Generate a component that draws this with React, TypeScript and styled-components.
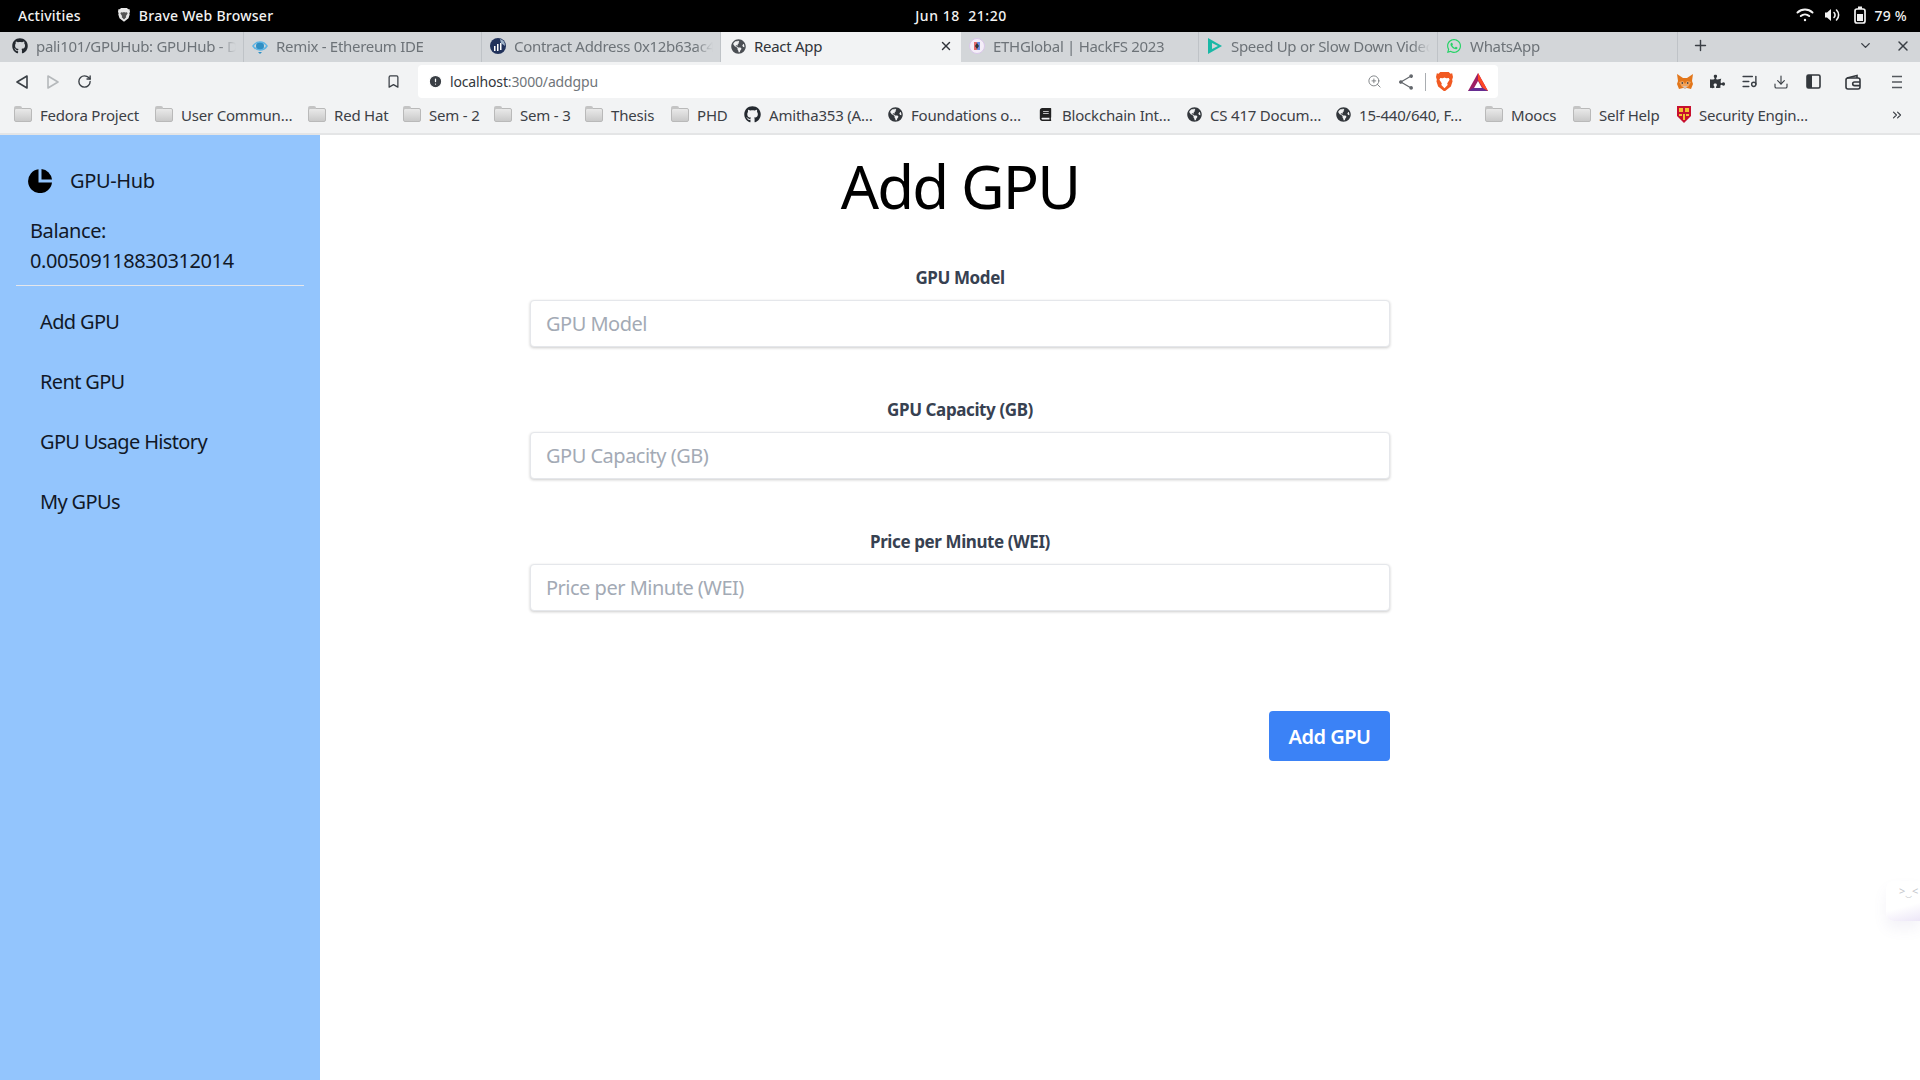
import React from "react";
import styled, { createGlobalStyle } from "styled-components";
import { FaGithub, FaGlobeAmericas, FaPuzzlePiece, FaBook, FaWhatsapp } from "react-icons/fa";
import { ZoomIn, Download, Plus, X, ChevronDown, ChevronsRight, RotateCw, Bookmark, ListMusic, AlertCircle } from "lucide-react";

const GlobalStyle = createGlobalStyle`
  * { box-sizing: border-box; }
  html, body { margin: 0; padding: 0; background: #fff; }
  body { font-family: "Noto Sans", "Open Sans", sans-serif; overflow: hidden; }
`;

const Page = styled.div`
  width: 1920px;
  height: 1080px;
  display: flex;
  flex-direction: column;
  overflow: hidden;
`;

const SystemBar = styled.div`
  height: 32px;
  background: #000;
  color: #f2f2f2;
  display: grid;
  grid-template-columns: 1fr auto 1fr;
  align-items: center;
  padding: 0 13px 2px 18px;
  font-size: 14px;
  font-weight: 500;
  letter-spacing: 0.25px;
`;

const SystemLeft = styled.div`
  display: flex;
  align-items: center;
`;

const AppName = styled.span`
  display: flex;
  align-items: center;
  gap: 9px;
  margin-left: 37px;
`;

const Clock = styled.span`
  letter-spacing: 0.55px;
  margin-right: 3px;
`;

const SystemRight = styled.div`
  display: flex;
  align-items: center;
  justify-content: flex-end;
`;

const StatusIcon = styled.span<{ $gap: number }>`
  display: flex;
  margin-right: ${(p) => p.$gap}px;
`;

const TabStrip = styled.div`
  height: 30px;
  background: #d3d6d9;
  display: flex;
  align-items: stretch;
  position: relative;
  z-index: 1;
`;

const Tab = styled.div<{ $active?: boolean; $width: number }>`
  width: ${(p) => p.$width}px;
  height: ${(p) => (p.$active ? 33 : 30)}px;
  background: ${(p) => (p.$active ? "#f2f3f4" : "transparent")};
  color: ${(p) => (p.$active ? "#30343a" : "#6d7378")};
  border-right: 1px solid ${(p) => (p.$active ? "transparent" : "#bfc3c7")};
  display: flex;
  align-items: center;
  gap: 8px;
  padding: 0 7px ${(p) => (p.$active ? 5 : 2)}px ${(p) => (p.$active ? 10 : 8)}px;
  font-size: 15px;
  letter-spacing: -0.3px;
  white-space: nowrap;

  &:first-child {
    padding-left: 12px;
  }
`;

const TabTitle = styled.span<{ $active?: boolean }>`
  flex: 1;
  overflow: hidden;
  min-width: 0;
  mask-image: ${(p) =>
    p.$active ? "none" : "linear-gradient(to right, #000 calc(100% - 18px), transparent)"};
`;

const StripControls = styled.div`
  flex: 1;
  display: flex;
  align-items: center;
  padding: 0 9px 3px 14px;
  color: #3a3f45;
`;

const Spacer = styled.div<{ $fixed?: number }>`
  flex: ${(p) => (p.$fixed ? `0 0 ${p.$fixed}px` : "1")};
`;

const Toolbar = styled.div`
  height: 37px;
  background: #f2f3f4;
  display: flex;
  align-items: center;
  padding: 2px 0 0 15px;
  color: #3a3f45;
`;

const NavGroup = styled.div`
  display: flex;
  align-items: center;
  gap: 17px;
`;

const BookmarkBtn = styled.div`
  display: flex;
  margin-left: 294px;
  color: #3a3f45;
`;

const UrlBar = styled.div`
  width: 1080px;
  height: 33px;
  margin-left: 17px;
  background: #fff;
  border-radius: 4px;
  display: flex;
  align-items: center;
  padding: 0 9px 0 10px;
  font-size: 14px;
  color: #70757a;
  letter-spacing: -0.15px;
`;

const UrlHost = styled.span`
  color: #33373c;
  margin-left: 7px;
`;

const UrlDivider = styled.div`
  width: 1px;
  height: 18px;
  background: #a9adb1;
  margin: 0 10px 0 12px;
`;

const UrlIcons = styled.div`
  display: flex;
  align-items: center;
  gap: 17px;
  color: #74787c;
`;

const Extensions = styled.div`
  flex: 1;
  display: flex;
  align-items: center;
  gap: 14px;
  padding-left: 178px;
  color: #3a3f45;
`;

const ExtensionSlot = styled.span<{ $offset?: number }>`
  display: flex;
  justify-content: center;
  width: 18px;
  margin-left: ${(p) => p.$offset ?? 0}px;
`;

const BookmarksBar = styled.div`
  height: 36px;
  background: #f2f3f4;
  border-bottom: 2px solid #e4e5e6;
  display: flex;
  align-items: center;
  gap: 16px;
  padding: 0 16px 3px 14px;
  font-size: 15px;
  letter-spacing: -0.2px;
  color: #3c4046;
  white-space: nowrap;
`;

const BookmarkItem = styled.div<{ $gap?: number }>`
  display: flex;
  align-items: center;
  gap: ${(p) => p.$gap ?? 8}px;
`;

const BookmarkText = styled.span<{ $width: number }>`
  display: block;
  width: ${(p) => p.$width}px;
`;

const Folder = styled.span`
  display: block;
  width: 18px;
  height: 14px;
  border-radius: 2px;
  background: linear-gradient(#e9e9e9, #c9c9c9);
  border: 1px solid #b9b9b9;
  position: relative;

  &::before {
    content: "";
    position: absolute;
    top: -3px;
    left: -1px;
    width: 8px;
    height: 3px;
    background: #c4c4c4;
    border-radius: 2px 2px 0 0;
  }
`;

const Body = styled.div`
  flex: 1;
  display: flex;
  min-height: 0;
  position: relative;
`;

const Sidebar = styled.aside`
  width: 320px;
  background: #93c5fd;
  padding: 31px 16px 0;
  color: #111827;
`;

const Brand = styled.div`
  display: flex;
  align-items: center;
  gap: 18px;
  padding-left: 12px;
  font-size: 20px;
  line-height: 30px;
  letter-spacing: -0.35px;
  color: #111827;
  height: 30px;
`;

const Balance = styled.div`
  padding: 0 14px 9px;
  margin-top: 20px;
  font-size: 20px;
  line-height: 30px;
  letter-spacing: -0.4px;
  border-bottom: 1px solid #e5e7eb;
`;

const NavList = styled.nav`
  display: flex;
  flex-direction: column;
  gap: 16px;
  padding: 14px 0 0 16px;
`;

const NavLink = styled.a`
  display: block;
  padding: 8px;
  height: 44px;
  font-size: 20px;
  line-height: 28px;
  letter-spacing: -0.65px;
  color: #111827;
`;

const Main = styled.main`
  flex: 1;
  display: flex;
  flex-direction: column;
  align-items: center;
  padding-right: 320px;
`;

const Heading = styled.h1`
  margin: 15px 0 0;
  font-size: 60px;
  line-height: 72px;
  font-weight: 400;
  color: #000;
  letter-spacing: -1.9px;
`;

const Form = styled.form`
  width: 860px;
  margin-top: 44px;
  display: flex;
  flex-direction: column;
`;

const Field = styled.div`
  display: flex;
  flex-direction: column;
  margin-bottom: 51px;
`;

const Label = styled.label`
  display: block;
  text-align: center;
  font-size: 17px;
  line-height: 24px;
  font-weight: 700;
  color: #374151;
  margin-bottom: 10px;
  letter-spacing: -0.4px;
`;

const Input = styled.input`
  width: 100%;
  height: 47px;
  border: 1px solid #e5e7eb;
  border-radius: 4px;
  background: #fff;
  box-shadow: 0 1px 3px rgba(0, 0, 0, 0.2);
  padding: 0 15px;
  font-family: inherit;
  font-size: 20px;
  letter-spacing: -0.5px;
  color: #374151;

  &::placeholder {
    color: #a3aab5;
    opacity: 1;
  }
`;

const Actions = styled.div`
  display: flex;
  justify-content: flex-end;
  margin-top: 49px;
`;

const SubmitButton = styled.button`
  width: 121px;
  height: 50px;
  border: none;
  border-radius: 4px;
  background: #3b82f6;
  color: #fff;
  font-family: inherit;
  font-size: 20px;
  font-weight: 600;
  letter-spacing: -0.5px;
`;

const FloatingTab = styled.div`
  position: absolute;
  right: 0;
  top: 746px;
  width: 34px;
  height: 40px;
  background: linear-gradient(165deg, #fff 62%, #ece6f7);
  box-shadow: 0 8px 14px rgba(120, 100, 170, 0.08);
  border-radius: 8px 0 0 8px;
  color: #c4c7cc;
  font-size: 11px;
  padding: 2px 0 0 13px;
  white-space: nowrap;
`;

const BackIcon = ({ faded }: { faded?: boolean }) => (
  <svg width="14" height="16" viewBox="0 0 14 16" fill="none" stroke={faded ? "#b5b8bb" : "#3a3f45"} strokeWidth="1.6" strokeLinejoin="round">
    {faded ? <path d="M2 2l10 6-10 6z" /> : <path d="M12 2L2 8l10 6z" />}
  </svg>
);

const BraveLion = ({ size = 17, face = "#fff", color = "#f15a22" }: { size?: number; face?: string; color?: string }) => (
  <svg width={size} height={size * 1.15} viewBox="0 0 20 23">
    <path d="M5 0h10l2 2 2-.5L20 6l-1 3 .5 2-2 6-7.5 6-7.5-6-2-6L1 9 0 6l1-4.5L3 2z" fill={color} />
    <path d="M5 7l3 .5 2-1 2 1 3-.5 1 2-2 3-1 2 1 1-4 4-4-4 1-1-1-2-2-3z" fill={face} />
  </svg>
);

const BatIcon = () => (
  <svg width="22" height="20" viewBox="0 0 22 20">
    <path d="M11 1l10 18H1z" fill="#9e1f63" />
    <path d="M11 9l-4.5 8h9z" fill="#fff" />
    <path d="M1 19l5-3h10l5 3z" fill="#662d91" />
    <path d="M11 1l10 18-5-3-5-8z" fill="#ff4724" />
  </svg>
);

const FoxIcon = () => (
  <svg width="18" height="18" viewBox="0 0 18 18">
    <path d="M1 1l6 4h4l6-4-1 7 1 3-2 5-4-1H7l-4 1-2-5 1-3z" fill="#e2761b" />
    <path d="M3 9l4-1 2 3 2-3 4 1-3 5H6z" fill="#f0a35e" />
    <path d="M7 11L5 10l2-1zM11 11l2-1-2-1z" fill="#233447" />
    <path d="M7 13h4l-1 3H8z" fill="#d7c1b3" />
  </svg>
);

const CrestIcon = () => (
  <svg width="14" height="17" viewBox="0 0 14 17">
    <path d="M0 0h14v10l-7 7-7-7z" fill="#c8102e" />
    <path d="M2 2h4v4H2zM8 2h4v4H8zM6 8h2v6H6zM2 8h3v2H2zM9 8h3v2H9z" fill="#f2c230" />
  </svg>
);

const RemixIcon = () => (
  <svg width="16" height="16" viewBox="0 0 16 16">
    <circle cx="8" cy="8" r="4" fill="#2f8fc4" />
    <path d="M1 8c2-3 4-4 7-4s5 1 7 4c-2 3-4 4-7 4s-5-1-7-4z" fill="none" stroke="#5db4e4" strokeWidth="1.5" />
    <path d="M6 14h4l-2 2z" fill="#2f8fc4" />
  </svg>
);

const EtherscanIcon = () => (
  <svg width="16" height="16" viewBox="0 0 16 16">
    <circle cx="8" cy="8" r="8" fill="#21325b" />
    <path d="M4 8h1.5v5H4zM7 6h1.5v7H7zM10 5h1.5v7H10z" fill="#fff" />
    <path d="M10 1a7 7 0 015 7l-4-3z" fill="#9fb3c8" />
  </svg>
);

const EthGlobalIcon = () => (
  <svg width="16" height="16" viewBox="0 0 16 16">
    <circle cx="8" cy="8" r="7.5" fill="#f4eef8" stroke="#d9c7ea" />
    <path d="M5 4h3v8H5z" fill="#e26a6a" />
    <path d="M8 4h3v8H8z" fill="#6a8fe2" />
    <path d="M8 5l2 3-2 3-2-3z" fill="#333" />
  </svg>
);

const PlayIcon = () => (
  <svg width="16" height="18" viewBox="0 0 16 18">
    <path d="M1 1l14 8-14 8z" fill="#19b8a6" />
    <path d="M5 6l6 3-6 3z" fill="#d3d6d9" />
  </svg>
);

const PieIcon = () => (
  <svg width="24" height="24" viewBox="0 0 24 24" fill="#000">
    <path d="M10.5 0.2A12 12 0 1 0 24 13.5H10.5z" />
    <path d="M13.5 0v10.5H24A12 12 0 0 0 13.5 0z" />
  </svg>
);

const WifiIcon = () => (
  <svg width="18" height="14" viewBox="0 0 18 14" fill="none" stroke="#f2f2f2" strokeWidth="2" strokeLinecap="round">
    <path d="M1.5 4.5a11 11 0 0 1 15 0" />
    <path d="M4.8 8a6.5 6.5 0 0 1 8.4 0" />
    <circle cx="9" cy="12" r="1.2" fill="#f2f2f2" stroke="none" />
  </svg>
);

const SpeakerIcon = () => (
  <svg width="16" height="14" viewBox="0 0 16 14" fill="none" stroke="#f2f2f2" strokeWidth="1.6" strokeLinecap="round">
    <path d="M1 4.5h2L7 1v12L3 9.5H1z" fill="#f2f2f2" stroke="none" />
    <path d="M10 4.5a3.5 3.5 0 0 1 0 5" />
    <path d="M12.5 2a7 7 0 0 1 0 10" />
  </svg>
);

const BatteryIcon = () => (
  <svg width="12" height="18" viewBox="0 0 12 18" fill="none">
    <rect x="1" y="3" width="10" height="14" rx="2" stroke="#f2f2f2" strokeWidth="1.7" />
    <rect x="4" y="0.5" width="4" height="2.5" fill="#f2f2f2" />
    <rect x="3" y="8" width="6" height="7" fill="#f2f2f2" />
  </svg>
);

const ShareIcon = () => (
  <svg width="14" height="16" viewBox="0 0 15 17" fill="#63676c" stroke="#63676c" strokeWidth="1.3">
    <path d="M13 2L2 8.5 13 15" fill="none" />
    <circle cx="13" cy="2.2" r="1.3" />
    <circle cx="2" cy="8.5" r="1.3" />
    <circle cx="13" cy="14.8" r="1.3" />
  </svg>
);

const PanelIcon = () => (
  <svg width="15" height="15" viewBox="0 0 15 15">
    <rect x="1" y="1" width="13" height="13" rx="1.5" fill="none" stroke="#33373c" strokeWidth="1.6" />
    <rect x="1" y="1" width="5" height="13" fill="#33373c" />
  </svg>
);

const WalletIcon = () => (
  <svg width="16" height="16" viewBox="0 0 16 16" fill="none" stroke="#33373c" strokeWidth="1.6">
    <path d="M2 4l10-2.5V4" />
    <rect x="1" y="4" width="14" height="11" rx="2" />
    <path d="M15 8H9.5a1.8 1.8 0 0 0 0 3.6H15" />
  </svg>
);

const MenuIcon = () => (
  <svg width="10" height="14" viewBox="0 0 10 14" stroke="#55595e" strokeWidth="1.5">
    <path d="M0 1.5h10M0 7h10M0 12.5h10" />
  </svg>
);

const tabs = [
  { title: "pali101/GPUHub: GPUHub - De", width: 244, icon: <FaGithub size={16} color="#24292f" /> },
  { title: "Remix - Ethereum IDE", width: 238, icon: <RemixIcon /> },
  { title: "Contract Address 0x12b63ac4", width: 239, icon: <EtherscanIcon /> },
  { title: "React App", width: 240, active: true, icon: <FaGlobeAmericas size={15} color="#4a4e53" /> },
  { title: "ETHGlobal | HackFS 2023", width: 238, icon: <EthGlobalIcon /> },
  { title: "Speed Up or Slow Down Video", width: 239, icon: <PlayIcon /> },
  { title: "WhatsApp", width: 240, icon: <FaWhatsapp size={16} color="#25d366" /> },
];

const bookmarks = [
  { label: "Fedora Project", width: 99 },
  { label: "User Commun…", width: 111 },
  { label: "Red Hat", width: 53 },
  { label: "Sem - 2", width: 49 },
  { label: "Sem - 3", width: 49 },
  { label: "Thesis", width: 44 },
  { label: "PHD", width: 31 },
  { label: "Amitha353 (A…", width: 103, icon: <FaGithub size={17} color="#24292f" /> },
  { label: "Foundations o…", width: 112, icon: <FaGlobeAmericas size={15} color="#33373c" /> },
  { label: "Blockchain Int…", width: 109, gap: 10, icon: <FaBook size={13} color="#222" /> },
  { label: "CS 417 Docum…", width: 110, icon: <FaGlobeAmericas size={15} color="#33373c" /> },
  { label: "15-440/640, F…", width: 110, icon: <FaGlobeAmericas size={15} color="#33373c" /> },
  { label: "Moocs", width: 46 },
  { label: "Self Help", width: 62 },
  { label: "Security Engin…", width: 112, icon: <CrestIcon /> },
];

const fields = ["GPU Model", "GPU Capacity (GB)", "Price per Minute (WEI)"];
const links = ["Add GPU", "Rent GPU", "GPU Usage History", "My GPUs"];

const App = () => {
  return (
    <Page>
      <GlobalStyle />
      <SystemBar>
        <SystemLeft>
          Activities
          <AppName>
            <BraveLion size={12} color="#e8e8e8" face="#555" />
            Brave Web Browser
          </AppName>
        </SystemLeft>
        <Clock>Jun 18&nbsp; 21:20</Clock>
        <SystemRight>
          <StatusIcon $gap={10}><WifiIcon /></StatusIcon>
          <StatusIcon $gap={14}><SpeakerIcon /></StatusIcon>
          <StatusIcon $gap={8}><BatteryIcon /></StatusIcon>
          <span>79 %</span>
        </SystemRight>
      </SystemBar>

      <TabStrip>
        {tabs.map((tab) => (
          <Tab key={tab.title} $active={tab.active} $width={tab.width}>
            {tab.icon}
            <TabTitle $active={tab.active}>{tab.title}</TabTitle>
            {tab.active && <X size={14} strokeWidth={2.4} color="#30343a" />}
          </Tab>
        ))}
        <StripControls>
          <Plus size={17} strokeWidth={2} />
          <Spacer />
          <ChevronDown size={15} strokeWidth={2.2} />
          <Spacer $fixed={22} />
          <X size={16} strokeWidth={2.2} />
        </StripControls>
      </TabStrip>

      <Toolbar>
        <NavGroup>
          <BackIcon />
          <BackIcon faded />
          <RotateCw size={15} strokeWidth={2.2} />
        </NavGroup>
        <BookmarkBtn>
          <Bookmark size={15} strokeWidth={2} />
        </BookmarkBtn>
        <UrlBar>
          <AlertCircle size={15} fill="#3a3f45" color="#fff" strokeWidth={2} />
          <UrlHost>localhost</UrlHost>:3000/addgpu
          <Spacer />
          <UrlIcons>
            <ZoomIn size={15} strokeWidth={1.4} />
            <ShareIcon />
          </UrlIcons>
          <UrlDivider />
          <BraveLion size={17} />
          <Spacer $fixed={14} />
          <BatIcon />
        </UrlBar>
        <Extensions>
          <ExtensionSlot><FoxIcon /></ExtensionSlot>
          <ExtensionSlot><FaPuzzlePiece size={15} color="#33373c" /></ExtensionSlot>
          <ExtensionSlot><ListMusic size={17} strokeWidth={2} /></ExtensionSlot>
          <ExtensionSlot><Download size={16} strokeWidth={1.7} /></ExtensionSlot>
          <ExtensionSlot><PanelIcon /></ExtensionSlot>
          <ExtensionSlot $offset={8}><WalletIcon /></ExtensionSlot>
          <ExtensionSlot $offset={12}><MenuIcon /></ExtensionSlot>
        </Extensions>
      </Toolbar>

      <BookmarksBar>
        {bookmarks.map((item) => (
          <BookmarkItem key={item.label} $gap={item.gap}>
            {item.icon ?? <Folder />}
            <BookmarkText $width={item.width}>{item.label}</BookmarkText>
          </BookmarkItem>
        ))}
        <Spacer />
        <ChevronsRight size={14} strokeWidth={2} />
      </BookmarksBar>

      <Body>
        <Sidebar>
          <Brand>
            <PieIcon />
            <span>GPU-Hub</span>
          </Brand>
          <Balance>
            Balance:
            <br />
            0.00509118830312014
          </Balance>
          <NavList>
            {links.map((link) => (
              <NavLink key={link}>{link}</NavLink>
            ))}
          </NavList>
        </Sidebar>

        <Main>
          <Heading>Add GPU</Heading>
          <Form onSubmit={(e) => e.preventDefault()}>
            {fields.map((field) => (
              <Field key={field}>
                <Label>{field}</Label>
                <Input placeholder={field} />
              </Field>
            ))}
            <Actions>
              <SubmitButton type="submit">Add GPU</SubmitButton>
            </Actions>
          </Form>
        </Main>
        <FloatingTab>&gt;‿&lt;</FloatingTab>
      </Body>
    </Page>
  );
};

export default App;
